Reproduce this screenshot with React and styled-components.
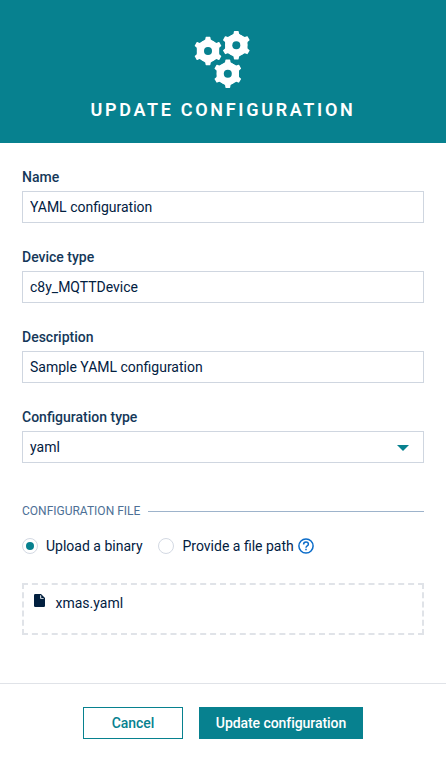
import React, { useState } from "react";
import styled, { createGlobalStyle } from "styled-components";

const teal = "#07818f";
const ink = "#02203f";

const GlobalStyle = createGlobalStyle`
  *, *::before, *::after { box-sizing: border-box; }
  body {
    margin: 0;
    background: #fff;
    color: ${ink};
    font: 400 14px/20px Roboto, sans-serif;
  }
`;

const Dialog = styled.form`
  display: flex;
  flex-direction: column;
  width: 100%;
  height: 758px;
`;

const Header = styled.header`
  display: flex;
  flex-direction: column;
  align-items: center;
  height: 143px;
  padding-top: 30px;
  background: ${teal};
  color: #fff;
`;

const Gears = styled.svg`
  display: block;
  width: 58px;
  height: 60px;
`;

const Title = styled.h1`
  margin: 8px 0 0;
  font-size: 18px;
  line-height: 24px;
  font-weight: 600;
  letter-spacing: 2.68px;
  text-transform: uppercase;
  white-space: nowrap;
`;

const Body = styled.main`
  display: flex;
  flex-direction: column;
  height: 540px;
  padding: 24px 22px 0;
`;

const Field = styled.div`
  display: flex;
  flex-direction: column;
  gap: 4px;
  margin-bottom: 24px;
`;

const Label = styled.label`
  height: 20px;
  color: #153859;
  font-weight: 500;
`;

const Input = styled.input`
  height: 32px;
  padding: 0 7px;
  border: 1px solid #cfd6e0;
  border-radius: 0;
  background: #fff;
  color: ${ink};
  font: inherit;
  outline: none;
`;

const Select = styled.div`
  display: flex;
  align-items: center;
  justify-content: space-between;
  height: 32px;
  padding: 0 14px 0 7px;
  border: 1px solid #cfd6e0;
`;

const Caret = styled.svg`
  width: 12px;
  height: 6px;
  margin-top: 1px;
  fill: ${teal};
`;

const Legend = styled.div`
  display: flex;
  align-items: center;
  gap: 8px;
  height: 20px;
  margin-top: 14px;
  color: #4d7096;
  font-size: 12px;
  text-transform: uppercase;

  &::after {
    content: "";
    flex: 1;
    height: 1px;
    background: #9db3cb;
  }
`;

const Options = styled.div`
  display: flex;
  align-items: center;
  height: 20px;
  margin-top: 15px;
`;

const Option = styled.label`
  display: flex;
  align-items: center;
  gap: ${(p) => p.$labelGap}px;
  margin-right: ${(p) => p.$gap}px;
`;

const Radio = styled.input.attrs({ type: "radio" })`
  appearance: none;
  display: grid;
  place-items: center;
  width: 16px;
  height: 16px;
  margin: 0;
  border: 1px solid #d3d9e3;
  border-radius: 50%;

  &:checked::before {
    content: "";
    width: 8px;
    height: 8px;
    border-radius: 50%;
    background: ${teal};
  }
`;

const Help = styled.svg`
  width: 16px;
  height: 16px;
  fill: none;
  stroke: #0b6cc9;
  stroke-width: 1.5;
`;

const DropZone = styled.div`
  display: flex;
  align-items: flex-start;
  gap: 10.5px;
  height: 52px;
  margin-top: 27px;
  padding: 8px 10px;
  border: 2px dashed #e0e3e8;
`;

const FileIcon = styled.svg`
  width: 11px;
  height: 13px;
  margin-top: 1px;
  fill: ${ink};
`;

const Footer = styled.footer`
  display: flex;
  justify-content: center;
  gap: 16px;
  height: 75px;
  padding-top: 23px;
  border-top: 1px solid #e0e3e8;
`;

const Button = styled.button`
  width: ${(p) => p.$width}px;
  height: 32px;
  padding: 0;
  border: 1px solid ${teal};
  background: ${(p) => (p.$primary ? teal : "#fff")};
  color: ${(p) => (p.$primary ? "#fff" : teal)};
  font: 500 14px/20px Roboto, sans-serif;
  letter-spacing: -0.06px;
`;

const Gear = ({ x, y }) => (
  <g transform={`translate(${x} ${y})`}>
    <path
      fill="#fff"
      stroke="#fff"
      strokeWidth="2"
      strokeLinejoin="round"
      d="M0-11 9.5-5.5V5.5L0 11-9.5 5.5V-5.5Z"
    />
    {[0, 60, 120, 180, 240, 300].map((angle) => (
      <path
        key={angle}
        fill="#fff"
        transform={`rotate(${angle})`}
        d="M-1.8-14.2H1.8Q2.4-14.2 2.4-13.6L2.8-11.4 6.5-9V-7H-6.5V-9L-2.8-11.4-2.4-13.6Q-2.4-14.2-1.8-14.2Z"
      />
    ))}
    <circle r="4" fill={teal} />
  </g>
);

const fields = [
  ["name", "Name", "YAML configuration"],
  ["device", "Device type", "c8y_MQTTDevice"],
  ["description", "Description", "Sample YAML configuration"],
];

export default function App() {
  const [source, setSource] = useState("binary");
  return (
    <>
      <GlobalStyle />
      <Dialog onSubmit={(e) => e.preventDefault()}>
        <Header>
          <Gears viewBox="194 30 58 60" aria-hidden="true">
            <Gear x={208} y={51} />
            <Gear x={236.3} y={45.2} />
            <Gear x={227.8} y={73.7} />
          </Gears>
          <Title>Update configuration</Title>
        </Header>
        <Body>
          {fields.map(([id, label, value]) => (
            <Field key={id}>
              <Label htmlFor={id}>{label}</Label>
              <Input id={id} defaultValue={value} />
            </Field>
          ))}
          <Field>
            <Label as="span">Configuration type</Label>
            <Select role="combobox" aria-label="Configuration type">
              yaml
              <Caret viewBox="0 0 12 6">
                <path d="M0 0H12L6 6Z" />
              </Caret>
            </Select>
          </Field>
          <Legend>Configuration file</Legend>
          <Options>
            <Option $labelGap={8} $gap={15}>
              <Radio name="source" checked={source === "binary"} onChange={() => setSource("binary")} />
              Upload a binary
            </Option>
            <Option $labelGap={9} $gap={4}>
              <Radio name="source" checked={source === "path"} onChange={() => setSource("path")} />
              Provide a file path
            </Option>
            <Help viewBox="0 0 16 16">
              <circle cx="8" cy="8" r="7.1" />
              <path d="M5.6 6.5C5.6 5.1 6.6 4.1 8 4.1S10.4 5 10.4 6.3C10.4 7.9 8 8 8 9.7M8 10.7V12.2" />
            </Help>
          </Options>
          <DropZone>
            <FileIcon viewBox="0 0 11 13">
              <path d="M1.2 0H7L11 4V11.8Q11 13 9.8 13H1.2Q0 13 0 11.8V1.2Q0 0 1.2 0Z" />
              <path fill="#fff" d="M6.2 1V4.8H10L9.3 4H7.2V1.8Z" />
            </FileIcon>
            xmas.yaml
          </DropZone>
        </Body>
        <Footer>
          <Button type="button" $width={100}>Cancel</Button>
          <Button type="submit" $primary $width={164}>Update configuration</Button>
        </Footer>
      </Dialog>
    </>
  );
}
